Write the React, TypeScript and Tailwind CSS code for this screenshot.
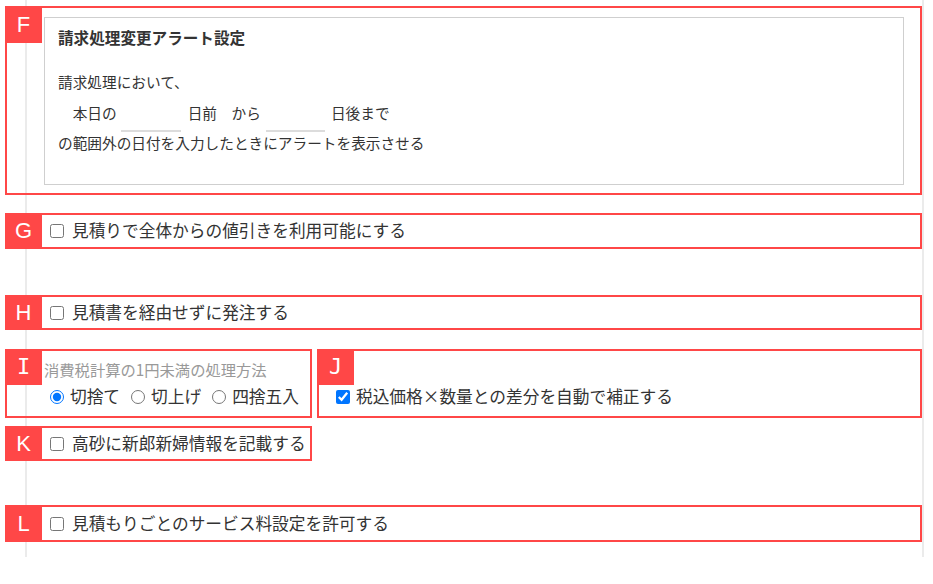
import type { ReactNode } from 'react';

function Tag({ children, mono = false, className = '' }: { children: ReactNode; mono?: boolean; className?: string }) {
  return (
    <div
      className={`-ml-[2px] w-[37px] shrink-0 bg-[#ff4747] text-white text-[22px] leading-none flex items-center justify-center ${
        mono ? "font-['DejaVu_Sans_Mono',monospace]" : "font-['Liberation_Sans',Arial,sans-serif]"
      } ${className}`}
    >
      {children}
    </div>
  );
}

function CheckRow({ tag, label, className = '' }: { tag: string; label: string; className?: string }) {
  return (
    <section className={`flex border-2 border-[#ff4747] ${className}`}>
      <Tag className="-my-[2px]">{tag}</Tag>
      <label className="ml-[8px] flex items-center">
        <input type="checkbox" className="m-0 h-[14px] w-[14px]" />
        <span className="ml-[8px] text-[16.7px]">{label}</span>
      </label>
    </section>
  );
}

export default function App() {
  return (
    <div className="h-[584px] w-[933px] overflow-hidden bg-white text-[#333] font-['Noto_Sans_CJK_JP',sans-serif]">
      <div className="ml-[25px] h-[557px] w-[899px] border-x-2 border-[#ebebeb] pt-[6px]">
        <div className="-ml-[22px] w-[917px]">
          {/* F: alert settings */}
          <section className="flex h-[189px] items-start border-2 border-[#ff4747]">
            <Tag className="-mt-[2px] h-[37px]">F</Tag>
            <div className="ml-[2px] mt-[9px] h-[168px] w-[860px] border border-[#cfcfcf] pl-[13px] pt-[9px] text-[14.67px] leading-[20px]">
              <div className="text-[15.6px] font-bold">請求処理変更アラート設定</div>
              <div className="mt-[25px]">請求処理において、</div>
              <div className="mt-[11px] flex h-[30px] items-start">
                <span>　本日の</span>
                <span className="ml-[4px] h-[29px] w-[60px] border-b-2 border-[#dcdcdc]" />
                <span className="ml-[7px]">日前　から</span>
                <span className="ml-[5px] h-[29px] w-[59px] border-b-2 border-[#dcdcdc]" />
                <span className="ml-[6px]">日後まで</span>
              </div>
              <div>の範囲外の日付を入力したときにアラートを表示させる</div>
            </div>
          </section>

          <CheckRow tag="G" label="見積りで全体からの値引きを利用可能にする" className="mt-[18px] h-[36px]" />
          <CheckRow tag="H" label="見積書を経由せずに発注する" className="mt-[46px] h-[35px]" />

          <div className="mt-[19px] flex gap-[5px]">
            <section className="h-[69px] w-[307px] border-2 border-[#ff4747]">
              <div className="flex items-center">
                <Tag mono className="-mt-[2px] h-[36px]">I</Tag>
                <span className="ml-[2px] mt-[2px] text-[15.3px] text-[#999]">消費税計算の1円未満の処理方法</span>
              </div>
              <div className="flex h-[24px] items-center pl-[43px] text-[16.7px]">
                {['切捨て', '切上げ', '四捨五入'].map((t, i) => (
                  <label key={t} className={`flex items-center ${i > 0 ? 'ml-[11px]' : ''}`}>
                    <input type="radio" name="round" defaultChecked={i === 0} className="m-0 h-[14px] w-[14px]" />
                    <span className="ml-[6px]">{t}</span>
                  </label>
                ))}
              </div>
            </section>
            <section className="h-[69px] w-[605px] border-2 border-[#ff4747]">
              <div className="flex">
                <Tag mono className="-mt-[2px] h-[36px]">J</Tag>
              </div>
              <label className="flex h-[24px] items-center pl-[17px]">
                <input type="checkbox" defaultChecked className="m-0 h-[14px] w-[14px]" />
                <span className="ml-[6px] text-[16.7px]">税込価格×数量との差分を自動で補正する</span>
              </label>
            </section>
          </div>

          <CheckRow tag="K" label="高砂に新郎新婦情報を記載する" className="mt-[8px] h-[35px] w-[307px]" />
          <CheckRow tag="L" label="見積もりごとのサービス料設定を許可する" className="mt-[44px] h-[37px]" />
        </div>
      </div>
    </div>
  );
}
